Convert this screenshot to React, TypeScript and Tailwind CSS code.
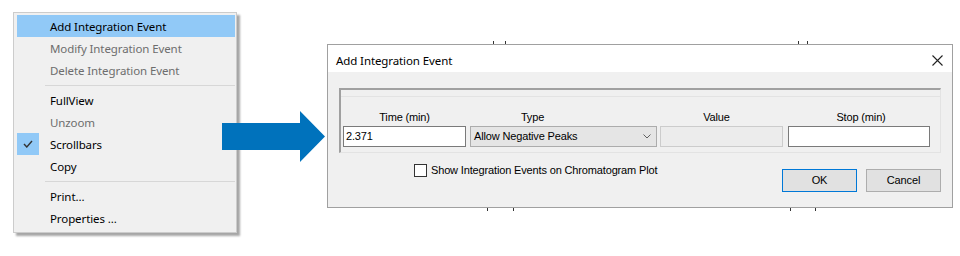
import React from "react";

const menuFont = "font-['Noto_Sans','Open_Sans',sans-serif] text-[11.5px] tracking-[-0.1px]";
const dlgFont = "font-['Liberation_Sans',Arial,sans-serif] text-[11px] tracking-[-0.15px]";

type Item = { label: string; disabled?: boolean; active?: boolean; checked?: boolean };

function MenuRow({ item }: { item: Item }) {
  return (
    <div
      className={`flex h-[22px] items-center ${
        item.active ? "bg-[#91c9f7]" : ""
      }`}
    >
      <div
        className={`flex h-[22px] w-[22px] items-center justify-center ${
          item.checked ? "bg-[#91c9f7]" : ""
        }`}
      >
        {item.checked && (
          <svg width="10" height="8" viewBox="0 0 10 8">
            <polyline points="1,4 3.8,7 9,1" fill="none" stroke="#333" strokeWidth="1.4" />
          </svg>
        )}
      </div>
      <span
        className={`ml-[11px] pt-[2px] leading-none ${
          item.disabled ? "text-[#6d6d6d]" : "text-black"
        }`}
      >
        {item.label}
      </span>
    </div>
  );
}

function Separator() {
  return (
    <div className="flex h-[8px] items-center pl-[28px]">
      <div className="h-px w-full bg-[#d7d7d7]" />
    </div>
  );
}

function ContextMenu() {
  const groups: Item[][] = [
    [
      { label: "Add Integration Event", active: true },
      { label: "Modify Integration Event", disabled: true },
      { label: "Delete Integration Event", disabled: true },
    ],
    [
      { label: "FullView" },
      { label: "Unzoom", disabled: true },
      { label: "Scrollbars", checked: true },
      { label: "Copy" },
    ],
    [{ label: "Print..." }, { label: "Properties ..." }],
  ];
  return (
    <div
      className={`ml-[13px] mt-[12px] h-[221px] w-[224px] shrink-0 border border-[#cccccc] bg-[#f0f0f0] pl-[3px] pr-[1px] pt-[2px] shadow-[3px_3px_2px_rgba(0,0,0,0.35)] ${menuFont}`}
    >
      {groups.map((g, gi) => (
        <div key={gi}>
          {gi > 0 && <Separator />}
          {g.map((item) => (
            <MenuRow key={item.label} item={item} />
          ))}
        </div>
      ))}
    </div>
  );
}

function Ticks({ xs }: { xs: number[] }) {
  // little axis ticks of the chart behind the dialog
  return (
    <div className="flex h-[3px]">
      {xs.map((x, i) => (
        <div
          key={i}
          className="h-[3px] w-px bg-[#333]"
          style={{ marginLeft: i === 0 ? x : x - xs[i - 1] - 1 }}
        />
      ))}
    </div>
  );
}

export default function App() {
  return (
    <div className="flex h-[256px] w-[960px] items-start overflow-hidden bg-white">
      <ContextMenu />

      <svg width="104" height="52" viewBox="0 0 104 52" className="ml-[-15px] mt-[111px] shrink-0">
        <polygon points="0,12 78,12 78,0 103,25.5 78,51 78,39 0,39" fill="#0072bc" />
      </svg>

      <div className="ml-[1px] mt-[41px] flex w-[626px] shrink-0 flex-col">
        <Ticks xs={[166, 178, 471, 480]} />
        <div className="h-[164px] border border-[#a0a0a0] bg-[#f0f0f0]">
          <div className={`flex h-[27px] items-center justify-between bg-white pl-[8px] pr-[9px] pt-[4px] ${menuFont}`}>
            <span className="text-black">Add Integration Event</span>
            <svg width="11" height="11" viewBox="0 0 11 11">
              <path d="M0.5 0.5 L10.5 10.5 M10.5 0.5 L0.5 10.5" stroke="#222" strokeWidth="1.1" />
            </svg>
          </div>

          <div className={`px-[11px] pt-[16px] text-black ${dlgFont}`}>
            <div className="h-[65px] border-b border-l-2 border-r border-t-2 border-b-[#e3e3e3] border-l-[#a0a0a0] border-r-[#e3e3e3] border-t-[#a0a0a0]">
              <div className="h-[7px] border-b border-[#e3e3e3]" />
              <div className="flex pl-[2px]">
                <div className="flex w-[123px] flex-col">
                  <div className="h-[29px] pt-[13px] text-center leading-[14px]">Time (min)</div>
                  <div className="flex h-[21px] items-center border border-[#7a7a7a] bg-white px-[2px]">2.371</div>
                </div>
                <div className="ml-[4px] flex w-[187px] flex-col">
                  <div className="h-[29px] pr-[62px] pt-[13px] text-center leading-[14px]">Type</div>
                  <div className="flex h-[21px] items-center justify-between border border-[#acacac] bg-[#e5e5e5] pl-[3px] pr-[5px]">
                    <span>Allow Negative Peaks</span>
                    <svg width="8" height="5" viewBox="0 0 8 5">
                      <polyline points="0.5,0.5 4,4 7.5,0.5" fill="none" stroke="#606060" strokeWidth="1" />
                    </svg>
                  </div>
                </div>
                <div className="ml-[3px] flex w-[123px] flex-col">
                  <div className="h-[29px] pr-[10px] pt-[13px] text-center leading-[14px]">Value</div>
                  <div className="h-[21px] border border-[#cccccc] bg-[#ececec]" />
                </div>
                <div className="ml-[5px] flex w-[142px] flex-col">
                  <div className="h-[29px] pl-[4px] pt-[13px] text-center leading-[14px]">Stop (min)</div>
                  <div className="h-[21px] border border-[#7a7a7a] bg-white" />
                </div>
              </div>
            </div>

            <div className="mt-[10px] flex items-start">
              <label className="ml-[75px] flex items-center">
                <span className="h-[13px] w-[13px] border border-[#333] bg-white" />
                <span className="ml-[4px] leading-[14px]">Show Integration Events on Chromatogram Plot</span>
              </label>
              <div className="ml-auto mt-[6px] flex gap-[9px]">
                <button className="h-[23px] w-[75px] border border-[#0078d7] bg-[#e1e1e1] text-center">OK</button>
                <button className="h-[23px] w-[75px] border border-[#adadad] bg-[#e1e1e1] text-center">Cancel</button>
              </div>
            </div>
          </div>
        </div>
        <Ticks xs={[160, 186, 463, 488]} />
      </div>
    </div>
  );
}
